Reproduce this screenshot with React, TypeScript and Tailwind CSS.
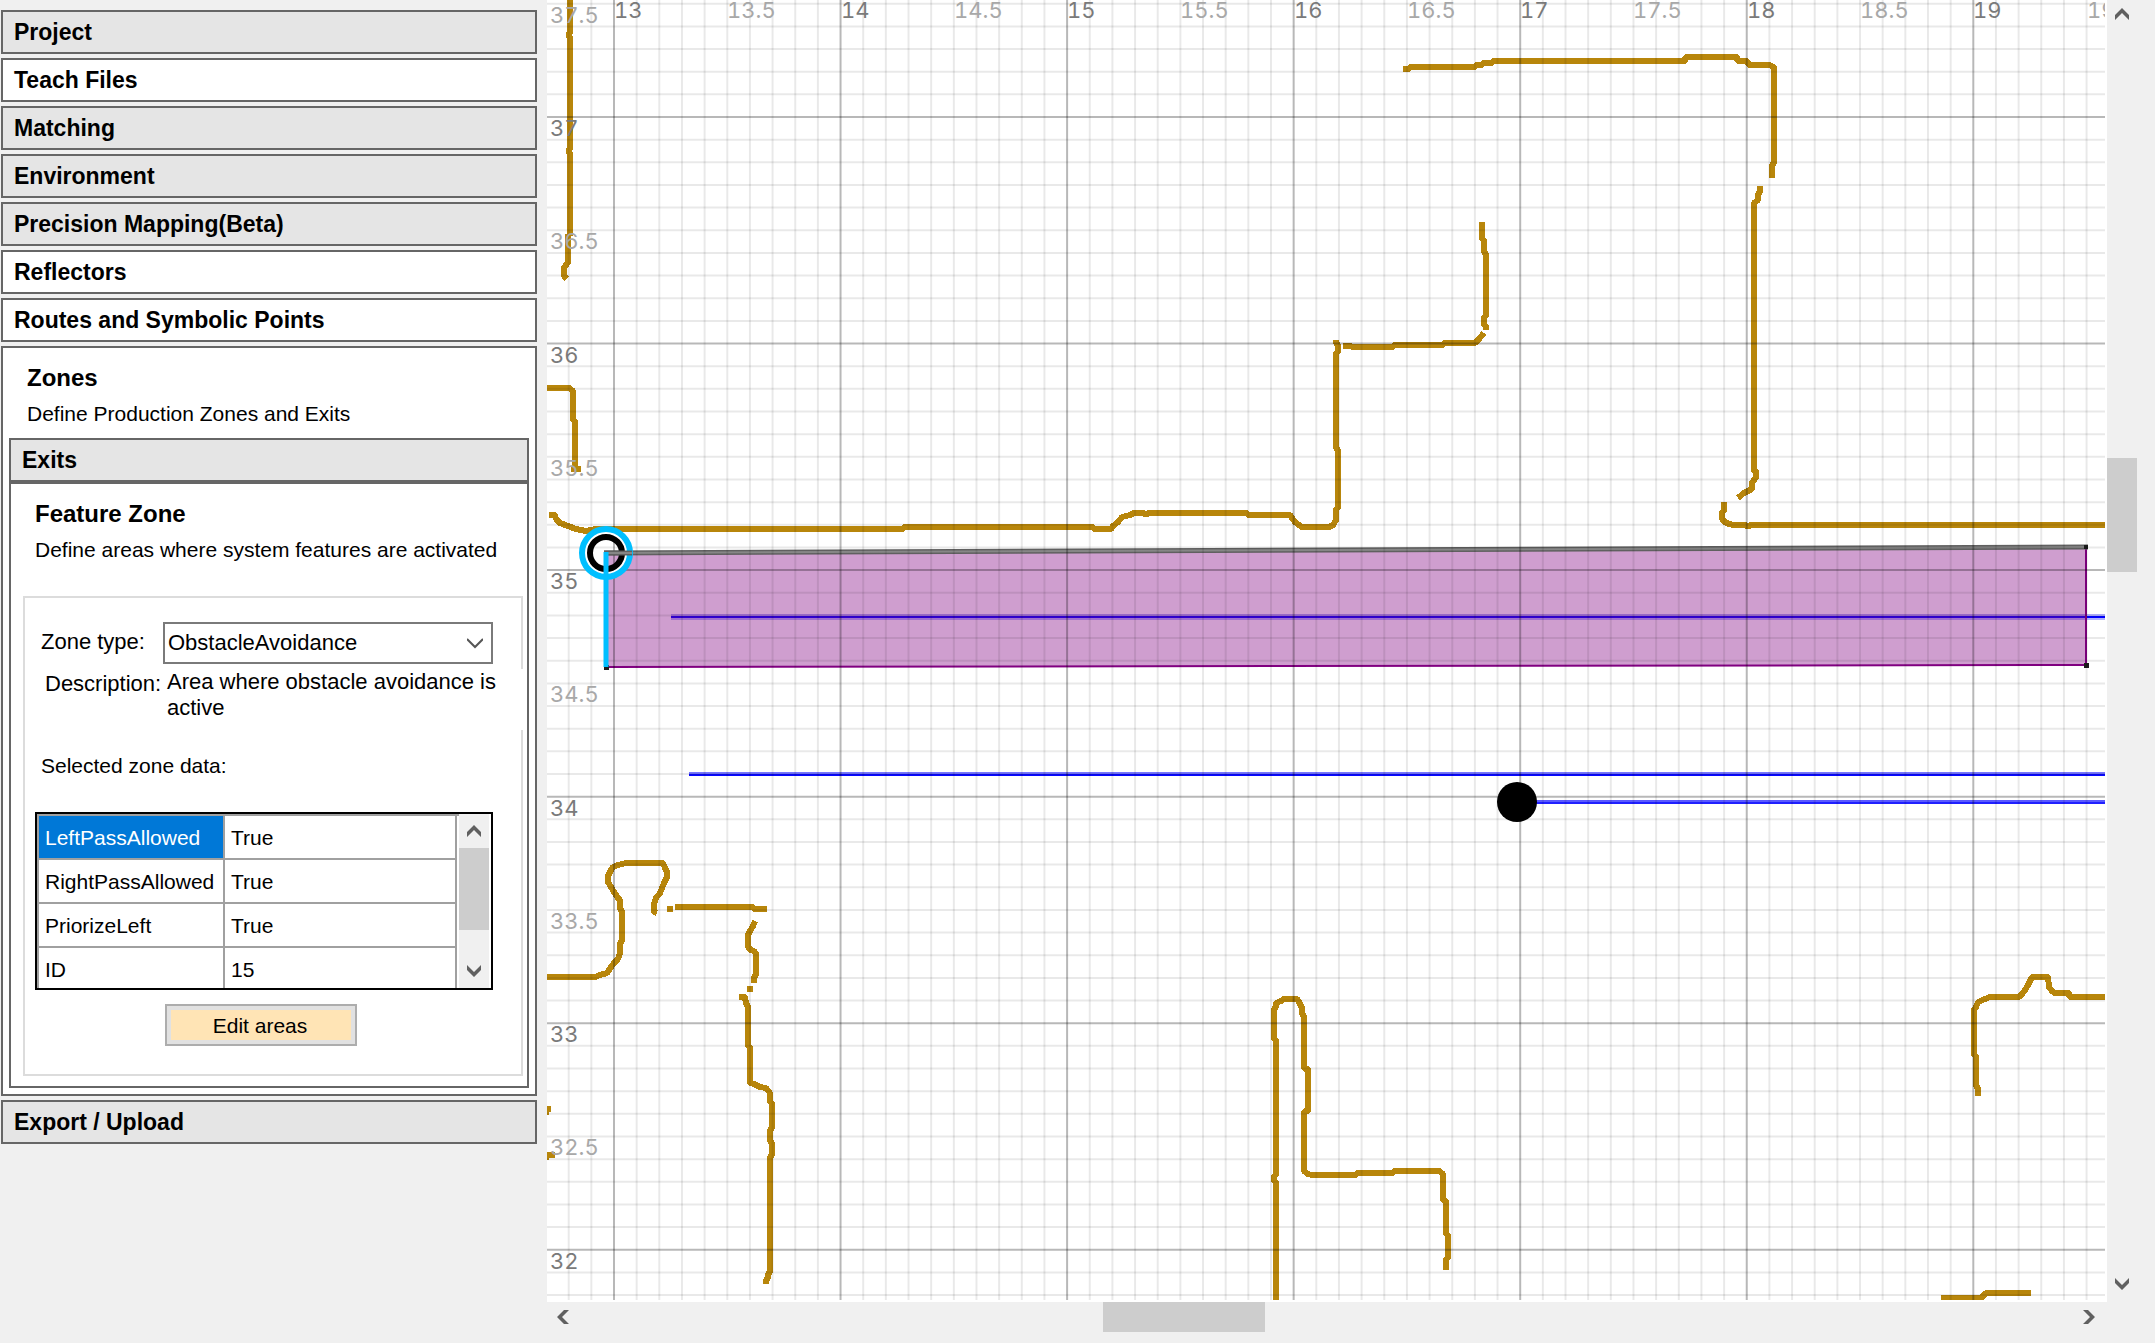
import React from "react";

const WALLS = [
  "M570 -4V32L568 35L570 38V148L568 151L570 154V236M568 234V262L566 265L564 268V276L567 279",
  "M544 388H569L573 391V421L575 421V471M571 469H581",
  "M549 515H555L556 519L560 523L568 526L576 529L586 531L596 529H903V527H1093V529H1111L1113 526L1118 522L1122 517L1130 515L1134 513H1143L1146 515L1149 513H1247V515H1290L1292 518L1295 522L1299 525L1302 527H1329L1333 525L1336 520V508L1338 508V450L1336 448V352L1338 352V345L1336 343V340",
  "M1343 346H1351V347H1393V345H1443V343H1475L1479 339L1484 333",
  "M1486 330V326L1484 326V316L1486 316V254L1484 252V240L1482 240V222",
  "M1403 69H1409V67H1475V65H1482V63H1492V61H1685V57H1737V61H1747L1749 65H1769L1774 67V163L1772 165V178",
  "M1760 186V192L1758 194V200L1754 203V472L1756 470V477L1752 483V489L1748 491L1744 493L1738 498",
  "M1724 502V511L1722 511V519L1725 522L1729 524L1734 525H1746L1748 527L1750 525H2110",
  "M544 977H595L600 975L607 973L611 967L614 963L618 959L620 953V943L622 941V911L620 909V900L618 898L614 892L611 887L608 882V876L611 870L613 867L618 865L626 863H663L665 868L667 872V877L664 883L660 893L656 898L654 904V912L657 913",
  "M667 909H673M675 907H753V909H767",
  "M755 921L753 926L750 931L748 935V947L751 950L754 951L756 954V975L754 977V983",
  "M747 989H753",
  "M739 997H745L746 1004L748 1006V1047L750 1047V1083L754 1084L760 1087L766 1088L770 1093V1103L772 1103V1128L770 1130V1141L772 1143V1155L770 1157V1272L768 1274V1278L766 1280V1284",
  "M544 1109H551M544 1112H549M544 1155H555M544 1157H549",
  "M1276 1304V1182L1274 1182V1175L1276 1175V1040L1274 1040V1009L1276 1007V1003L1281 1001L1284 999H1297L1299 1002L1302 1008V1014L1304 1016V1069L1308 1069V1111L1304 1111V1171L1308 1174L1312 1175H1356V1173H1393V1171H1439L1443 1174V1201L1446 1201V1235L1448 1235V1258L1446 1258V1270",
  "M1978 1096V1088L1976 1086V1056L1974 1055V1010L1976 1007L1978 1002L1985 999L1990 997H2019L2022 994L2025 990L2028 985L2032 977H2048L2049 987L2052 991L2055 993H2069V997H2110",
  "M1941 1298H1981L1986 1293H2031",
];

// World coordinates to drawing units: one metre spans 226.55 units.
const METRE = 226.55;
const xOf = (m: number) => 614 + (m - 13) * METRE;
const yOf = (m: number) => 117 + (37 - m) * METRE;
const tenths = (from: number, to: number) =>
  Array.from({ length: to - from + 1 }, (_, i) => from + i);
const COLS = tenths(128, 195);
const ROWS = tenths(318, 375);
const X_LABELS = tenths(26, 39).map((n) => n / 2);
const Y_LABELS = tenths(64, 75).map((n) => n / 2);

function MapCanvas() {
  return (
    <svg
      className="block h-full w-full bg-white"
      viewBox="547 0 1558 1300"
      preserveAspectRatio="xMinYMin slice"
      role="img"
      aria-label="Map"
    >
      <g
        fill="none"
        stroke="#b8860b"
        strokeWidth="6"
        strokeLinejoin="bevel"
        shapeRendering="crispEdges"
      >
        {WALLS.map((d) => (
          <path key={d} d={d} />
        ))}
      </g>
      <rect x="671" y="614" width="1440" height="6" fill="#0000ff" opacity="0.3" />
      <rect x="671" y="616" width="1440" height="2" fill="#0000ff" />
      <rect x="689" y="772" width="1420" height="2" fill="#7777ff" />
      <rect x="689" y="774" width="1420" height="2" fill="#0808ff" />
      <rect x="1517" y="800" width="590" height="2" fill="#5a5aff" />
      <rect x="1517" y="802" width="590" height="2" fill="#2020ff" />
      <path d="M606 553L2086 547V665L606 667Z" fill="#800080" fillOpacity="0.38" />
      <path d="M606 667L2086 665V547" fill="none" stroke="#800080" strokeWidth="2" />
      <path d="M604 553L2088 547" stroke="#606060" strokeWidth="5" />
      <path d="M604 553L2088 547" stroke="#868686" strokeWidth="2" />
      <g fill="#1c1c1c">
        <rect x="604" y="665" width="5" height="5" />
        <rect x="2084" y="663" width="5" height="5" />
        <rect x="2084" y="545" width="4" height="4" />
      </g>
      <g stroke="#000">
        {COLS.map((n) => (
          <line
            key={n}
            x1={xOf(n / 10)}
            x2={xOf(n / 10)}
            y1="0"
            y2="1304"
            strokeWidth="2"
            strokeOpacity={n % 10 === 0 ? 0.28 : 0.085}
          />
        ))}
        {ROWS.map((n) => (
          <line
            key={n}
            x1="540"
            x2="2110"
            y1={yOf(n / 10)}
            y2={yOf(n / 10)}
            strokeWidth="2"
            strokeOpacity={n % 10 === 0 ? 0.28 : 0.085}
          />
        ))}
      </g>
      <circle cx="606" cy="553" r="20" fill="none" stroke="#fff" strokeWidth="4" />
      <circle cx="606" cy="553" r="24" fill="none" stroke="#00bfff" strokeWidth="6" />
      <circle cx="606" cy="553" r="16" fill="none" stroke="#000" strokeWidth="6" />
      <path d="M604 553H632" stroke="#606060" strokeWidth="5" />
      <path d="M604 553H632" stroke="#868686" strokeWidth="2" />
      <path d="M606 552V667" stroke="#00bfff" strokeWidth="5" />
      <circle cx="1517" cy="802" r="20" fill="#000" />
      <g className="font-[Inter,sans-serif] text-[22px] tabular-nums">
        {X_LABELS.map((m) => (
          <text key={m} x={Math.round(xOf(m))} y="18" fill={m % 1 ? "#a8a8a8" : "#7a7a7a"}>
            {m}
          </text>
        ))}
        {Y_LABELS.map((m) => (
          <text key={m} x="550" y={Math.round(yOf(m)) + 19} fill={m % 1 ? "#a8a8a8" : "#7a7a7a"}>
            {m}
          </text>
        ))}
      </g>
    </svg>
  );
}

type Direction = "up" | "down" | "left" | "right";

const ARROWS: Record<Direction, string> = {
  up: "M7 1L14 8V13L7 6L0 13V8Z",
  down: "M7 13L14 6V1L7 8L0 1V6Z",
  left: "M1 7L8 0H13L6 7L13 14H8Z",
  right: "M13 7L6 0H1L8 7L1 14H6Z",
};

function ScrollButton({ direction, className }: { direction: Direction; className: string }) {
  return (
    <button
      type="button"
      aria-label={`Scroll ${direction}`}
      className={`flex shrink-0 items-center justify-center ${className}`}
    >
      <svg className="h-[14px] w-[14px]" viewBox="0 0 14 14">
        <path d={ARROWS[direction]} fill="#606060" />
      </svg>
    </button>
  );
}

function Section({ title, shaded }: { title: string; shaded?: boolean }) {
  return (
    <button
      type="button"
      className={`flex h-11 w-full shrink-0 items-center border-2 border-[#666666] px-[11px] text-left text-[23px] leading-[28px] font-bold ${
        shaded ? "bg-[#e5e5e5]" : "bg-white"
      }`}
    >
      {title}
    </button>
  );
}

const ZONE_DATA = [
  ["LeftPassAllowed", "True"],
  ["RightPassAllowed", "True"],
  ["PriorizeLeft", "True"],
  ["ID", "15"],
];

function ZoneTable() {
  return (
    <div className="mt-[32px] ml-[10px] flex h-[178px] w-[458px] border-2 border-black bg-white pr-[2px]">
      <div className="min-w-0 flex-1 overflow-hidden border-t-2 border-l-2 border-[#a0a0a0]">
        <table className="w-[418px] table-fixed border-separate border-spacing-0 leading-[28px]">
          <tbody>
            {ZONE_DATA.map(([name, value], i) => (
              <tr key={name} className="h-11">
                <th
                  scope="row"
                  className={`w-[186px] border-r-2 border-b-2 border-[#a0a0a0] p-0 pt-[2px] pl-[6px] text-left font-normal ${
                    i === 0 ? "bg-[#0078d7] text-white" : ""
                  }`}
                >
                  {name}
                </th>
                <td className="border-r-2 border-b-2 border-[#a0a0a0] p-0 pt-[2px] pl-[6px]">
                  {value}
                </td>
              </tr>
            ))}
          </tbody>
        </table>
      </div>
      <div className="flex w-[30px] shrink-0 flex-col bg-[#f0f0f0]">
        <ScrollButton direction="up" className="h-[34px]" />
        <div className="h-[82px] bg-[#cdcdcd]" />
        <div className="flex-1" />
        <ScrollButton direction="down" className="h-[34px]" />
      </div>
    </div>
  );
}

function FeatureZone() {
  return (
    <section className="border-2 border-[#666666] pt-[16px] pb-[10px]">
      <h3 className="pl-[24px] text-[24px] leading-[28px] font-bold">Feature Zone</h3>
      <p className="mt-2 pl-[24px] leading-[28px] whitespace-nowrap">
        Define areas where system features are activated
      </p>
      <div className="mt-[32px] mr-1 ml-3 border-2 border-[#dcdcdc] pt-[24px] pb-[28px]">
        <div className="flex items-center pl-[16px]">
          <label htmlFor="zone-type" className="w-[122px] pb-[2px] text-[22px] leading-[28px]">
            Zone type:
          </label>
          <div className="relative">
            <select
              id="zone-type"
              defaultValue="ObstacleAvoidance"
              className="block h-[42px] w-[330px] appearance-none border-2 border-[#7a7a7a] bg-white pb-[2px] pl-[3px] text-[22px]"
            >
              <option>ObstacleAvoidance</option>
            </select>
            <svg
              className="pointer-events-none absolute top-[16px] right-[10px] h-[12px] w-[16px]"
              viewBox="0 0 16 12"
            >
              <path d="M0 1L8 9L16 1" fill="none" stroke="#555" strokeWidth="2" />
            </svg>
          </div>
        </div>
        <div className="relative mt-[5px] -mr-[2px] flex h-[61px] bg-white pl-[20px] text-[22px]">
          <span className="w-[122px] shrink-0 pt-px leading-[28px]">Description:</span>
          <p className="leading-[26px]">Area where obstacle avoidance is active</p>
        </div>
        <p className="mt-[22px] pl-[16px] leading-[28px]">Selected zone data:</p>
        <ZoneTable />
        <button
          type="button"
          className="mt-[14px] ml-[140px] block h-[42px] w-[192px] border-2 border-[#adadad] bg-[#e1e1e1] p-1"
        >
          <span className="flex h-full items-center justify-center bg-[#ffe4b5] pt-[2px] pr-[2px]">
            Edit areas
          </span>
        </button>
      </div>
    </section>
  );
}

export default function App() {
  return (
    <div className="flex h-screen w-full overflow-hidden bg-[#f0f0f0] font-['Liberation_Sans',Arial,sans-serif] text-[21px] text-black">
      <aside className="flex w-[537px] shrink-0 flex-col gap-1 pt-[10px] pl-[1px]">
        <Section title="Project" shaded />
        <Section title="Teach Files" />
        <Section title="Matching" shaded />
        <Section title="Environment" shaded />
        <Section title="Precision Mapping(Beta)" shaded />
        <Section title="Reflectors" />
        <Section title="Routes and Symbolic Points" />
        <section className="border-2 border-[#666666] bg-white px-[6px] pt-[16px] pb-[6px]">
          <h2 className="pl-[18px] text-[24px] leading-[28px] font-bold">Zones</h2>
          <p className="mt-2 mb-[10px] pl-[18px] leading-[28px]">
            Define Production Zones and Exits
          </p>
          <Section title="Exits" shaded />
          <FeatureZone />
        </section>
        <Section title="Export / Upload" shaded />
      </aside>
      <main className="ml-[10px] flex min-w-0 flex-1 flex-col pr-[18px] pb-[11px]">
        <div className="flex min-h-0 flex-1">
          <div className="min-w-0 flex-1 bg-white pr-[2px] pb-[2px]">
            <MapCanvas />
          </div>
          <div className="flex w-[30px] shrink-0 flex-col">
            <ScrollButton direction="up" className="h-[28px]" />
            <div className="flex-[430]" />
            <div className="flex-[114] bg-[#cdcdcd]" />
            <div className="flex-[694]" />
            <ScrollButton direction="down" className="h-[36px]" />
          </div>
        </div>
        <div className="mr-[30px] flex h-[30px] shrink-0">
          <ScrollButton direction="left" className="w-[32px]" />
          <div className="flex-[524]" />
          <div className="flex-[162] bg-[#cdcdcd]" />
          <div className="flex-[806]" />
          <ScrollButton direction="right" className="w-[36px]" />
        </div>
      </main>
    </div>
  );
}
